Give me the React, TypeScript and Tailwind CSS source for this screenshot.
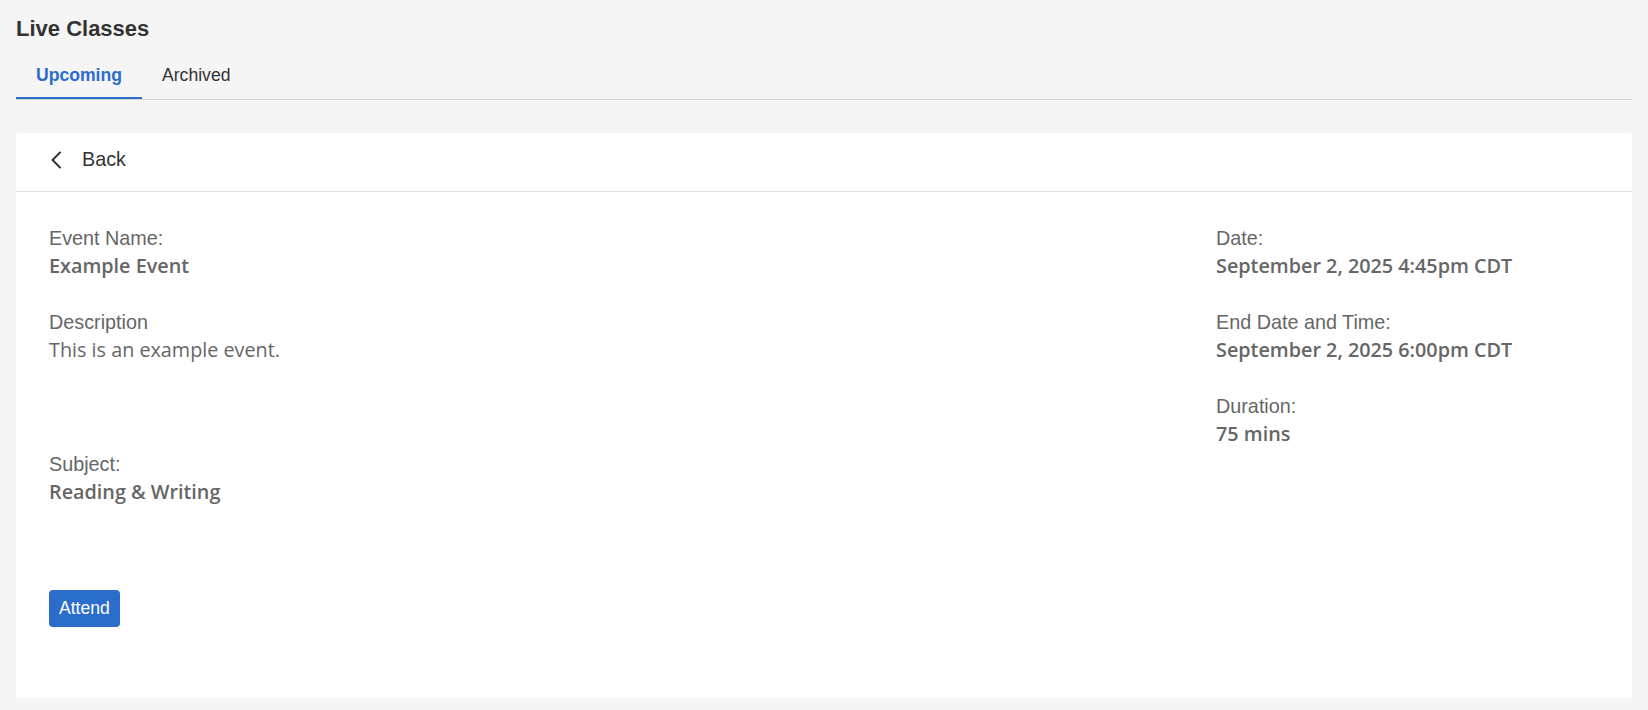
import React from 'react';

const Field: React.FC<{ label: string; value: string; bold?: boolean; className?: string }> = ({ label, value, bold = true, className = 'mb-[28px]' }) => (
  <div className={className}>
    <div className="text-[19.8px] leading-[28px] text-[#666] font-['Liberation_Sans',Arial,sans-serif]">{label}</div>
    <div
      className={`text-[19.8px] leading-[28px] text-[#666] font-['Open_Sans',sans-serif] ${bold ? 'font-semibold' : 'font-normal'}`}
    >
      {value}
    </div>
  </div>
);

const App: React.FC = () => {
  return (
    <div className="min-h-[710px] bg-[#f5f5f5] px-[16px] pt-[13px] pb-[13px] font-['Liberation_Sans',Arial,sans-serif]">
      {/* Page title */}
      <h1 className="text-[22px] leading-[32px] font-bold text-[#333]">Live Classes</h1>

      {/* Tabs */}
      <div className="mt-[14px] flex border-b border-[#d4d4d4]">
        <button className="w-[126px] h-[40px] pb-[6px] text-[17.6px] font-bold text-[#2b6dcb] border-b-2 border-[#2b6dcb]">
          Upcoming
        </button>
        <button className="px-[20px] h-[40px] pb-[8px] text-[17.6px] text-[#333]">Archived</button>
      </div>

      {/* Card */}
      <div className="mt-[33px] bg-white rounded-[4px]">
        <div className="h-[59px] flex items-center pl-[34px] border-b border-[#e2e2e2]">
          <button className="flex items-center gap-[20px] text-[19.8px] text-[#333] -mt-[4px]">
            <svg width="12" height="18" viewBox="0 0 12 18" fill="none">
              <path d="M10 1.5 L2.5 9 L10 16.5" stroke="#333" strokeWidth="2" strokeLinecap="round" strokeLinejoin="round" />
            </svg>
            <span>Back</span>
          </button>
        </div>

        <div className="px-[33px] pt-[32px] pb-[71px]">
          <div className="flex">
            <div className="w-[1167px]">
              <Field label="Event Name:" value="Example Event" />
              <Field label="Description" value="This is an example event." bold={false} className="mb-[86px]" />
              <Field label="Subject:" value="Reading & Writing" className="mb-[84px]" />
            </div>
            <div className="flex-1">
              <Field label="Date:" value="September 2, 2025 4:45pm CDT" />
              <Field label="End Date and Time:" value="September 2, 2025 6:00pm CDT" />
              <Field label="Duration:" value="75 mins" />
            </div>
          </div>
          <button className="h-[37px] px-[10px] rounded-[4px] bg-[#2b6dcb] text-white text-[17.6px]">Attend</button>
        </div>
      </div>
    </div>
  );
};

export default App;
